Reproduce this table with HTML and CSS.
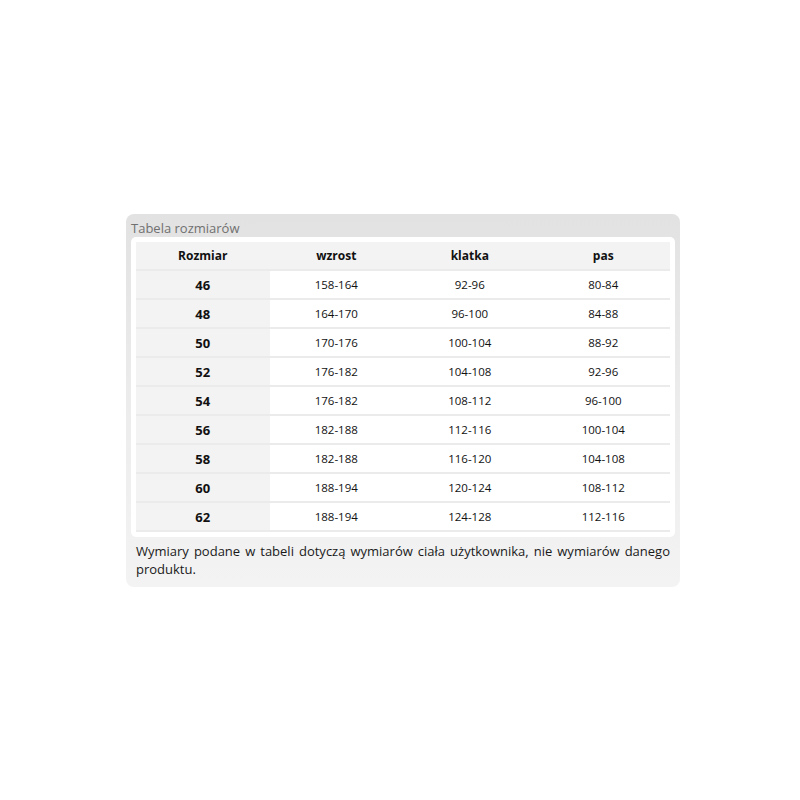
FILE: index.html
```html
<!DOCTYPE html>
<html lang="pl">
<head>
<meta charset="utf-8">
<link rel="stylesheet" href="styles.css">
</head>
<body>
<div class="page">
  <div class="box">
    <div class="title">Tabela rozmiarów</div>
    <div class="inner">
      <table class="sizes">
        <thead>
          <tr><th>Rozmiar</th><th>wzrost</th><th>klatka</th><th>pas</th></tr>
        </thead>
        <tbody>
          <tr><td>46</td><td>158-164</td><td>92-96</td><td>80-84</td></tr>
          <tr><td>48</td><td>164-170</td><td>96-100</td><td>84-88</td></tr>
          <tr><td>50</td><td>170-176</td><td>100-104</td><td>88-92</td></tr>
          <tr><td>52</td><td>176-182</td><td>104-108</td><td>92-96</td></tr>
          <tr><td>54</td><td>176-182</td><td>108-112</td><td>96-100</td></tr>
          <tr><td>56</td><td>182-188</td><td>112-116</td><td>100-104</td></tr>
          <tr><td>58</td><td>182-188</td><td>116-120</td><td>104-108</td></tr>
          <tr><td>60</td><td>188-194</td><td>120-124</td><td>108-112</td></tr>
          <tr><td>62</td><td>188-194</td><td>124-128</td><td>112-116</td></tr>
        </tbody>
      </table>
    </div>
    <p class="note">Wymiary podane w tabeli dotyczą wymiarów ciała użytkownika, nie wymiarów danego produktu.</p>
  </div>
</div>
</body>
</html>
```
FILE: styles.css
```css
html, body {
  margin: 0;
  padding: 0;
  background: #fff;
}
body {
  font-family: "Open Sans", "Noto Sans", sans-serif;
  color: #111;
}
.page {
  padding: 214px 0 0 126px;
}
.box {
  width: 554px;
  border-radius: 8px;
  background: linear-gradient(to bottom, #e2e2e2 0%, #ececec 50%, #f3f3f3 100%);
}
.title {
  padding: 5px 5px 0 5px;
  height: 18px;
  font-size: 13px;
  line-height: 18px;
  color: #707070;
}
.inner {
  margin: 0 5px;
  padding: 5px;
  background: #fff;
  border-radius: 5px;
}
.sizes {
  width: 534px;
  border-collapse: collapse;
  table-layout: fixed;
}
.sizes th, .sizes td {
  text-align: center;
  border-bottom: 2px solid #ebebeb;
  padding: 0;
}
.sizes th {
  height: 27px;
  background: #f3f3f3;
  font-size: 12px;
  font-weight: 700;
}
.sizes td {
  height: 27px;
  font-size: 11.5px;
}
.sizes td:first-child {
  background: #f3f3f3;
  font-size: 13px;
  font-weight: 700;
}
.note {
  margin: 0;
  padding: 5px 10px 9px 10px;
  font-size: 13px;
  line-height: 18px;
  text-align: justify;
  color: #1a1a1a;
}
```
